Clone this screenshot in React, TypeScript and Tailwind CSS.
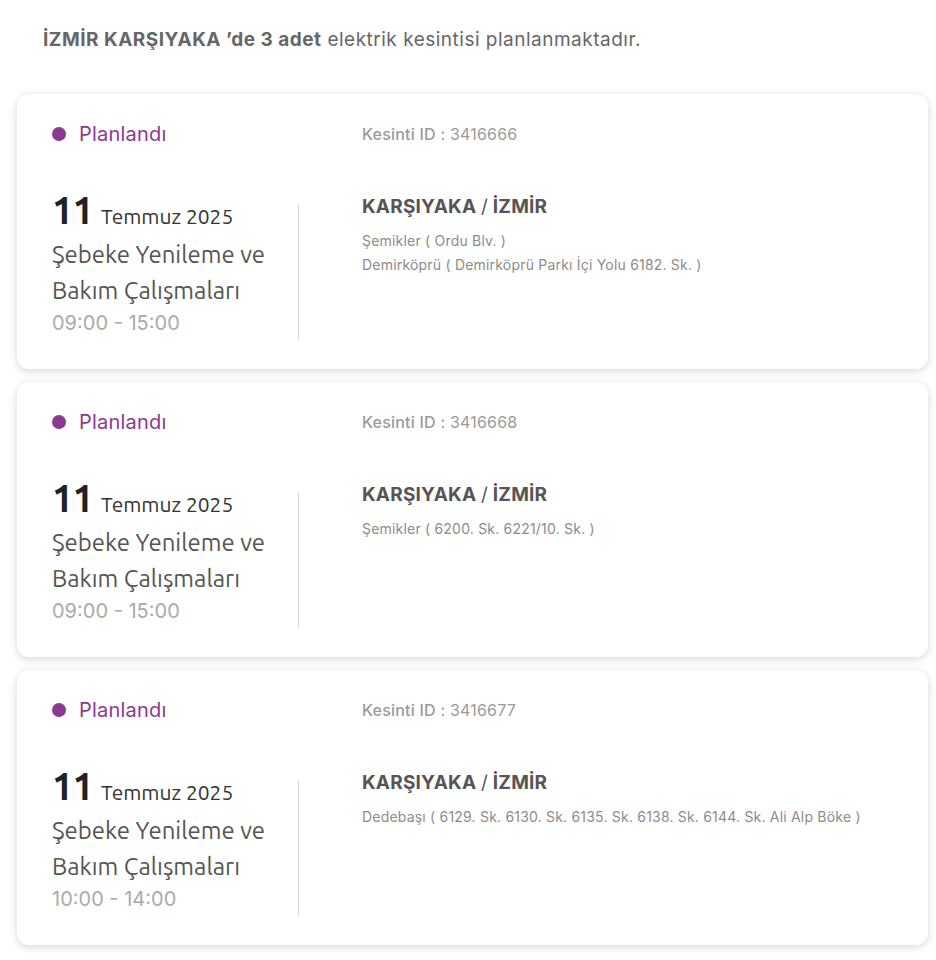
import React from "react";

type Outage = {
  id: string;
  day: string;
  monthYear: string;
  time: string;
  addresses: string[];
};

const OUTAGES: Outage[] = [
  {
    id: "3416666",
    day: "11",
    monthYear: "Temmuz 2025",
    time: "09:00 - 15:00",
    addresses: ["Şemikler ( Ordu Blv. )", "Demirköprü ( Demirköprü Parkı İçi Yolu 6182. Sk. )"],
  },
  {
    id: "3416668",
    day: "11",
    monthYear: "Temmuz 2025",
    time: "09:00 - 15:00",
    addresses: ["Şemikler ( 6200. Sk. 6221/10. Sk. )"],
  },
  {
    id: "3416677",
    day: "11",
    monthYear: "Temmuz 2025",
    time: "10:00 - 14:00",
    addresses: ["Dedebaşı ( 6129. Sk. 6130. Sk. 6135. Sk. 6138. Sk. 6144. Sk. Ali Alp Böke )"],
  },
];

function OutageCard({ outage }: { outage: Outage }) {
  return (
    <article className="h-[275px] rounded-xl bg-white px-[35px] pt-[26px] shadow-[0_2px_8px_rgba(0,0,0,0.16)]">
      <div className="flex h-[28px] items-center">
        <div className="flex w-[310px] items-center gap-[13px]">
          <span className="h-[14px] w-[14px] rounded-full bg-[#8a3b8f]" />
          <span className="text-[20px] tracking-[0.2px] text-[#8a3b8f]">Planlandı</span>
        </div>
        <p className="text-[16px] tracking-[0.2px] text-[#9a9a9a]">
          <span className="font-medium">Kesinti ID</span> : {outage.id}
        </p>
      </div>

      <div className="mt-[43px] flex">
        <div className="w-[246px] font-['Ubuntu','Open_Sans',sans-serif]">
          <div className="flex items-baseline gap-[8px] leading-none">
            <span className="text-[38px] font-bold tracking-tight text-[#222]">{outage.day}</span>
            <span className="text-[21px] text-[#333]">{outage.monthYear}</span>
          </div>
          <p className="mt-[8px] text-[24px] leading-[36px] text-[#555]">
            Şebeke Yenileme ve Bakım Çalışmaları
          </p>
          <p className="text-[20px] leading-[28px] text-[#aaa] font-['Inter',sans-serif]">{outage.time}</p>
        </div>
        <div className="mt-[13px] h-[135px] w-px bg-[#d6d6d6]" />
        <div className="pl-[63px] pt-[2px]">
          <p className="text-[19px] font-bold tracking-[0.2px] text-[#555]">
            KARŞIYAKA <span className="font-normal">/</span> İZMİR
          </p>
          <div className="mt-[8px] text-[14px] leading-[24px] tracking-[0.2px] text-[#8c8c8c]">
            {outage.addresses.map((a) => (
              <p key={a}>{a}</p>
            ))}
          </div>
        </div>
      </div>
    </article>
  );
}

export default function App() {
  return (
    <div className="min-h-[960px] bg-white font-['Inter',sans-serif]">
      <div className="px-[17px] pb-4 pt-[26px]">
        <p className="pl-[26px] text-[19px] tracking-[0.5px] text-[#666]">
          <span className="font-bold">İZMİR KARŞIYAKA ’de 3 adet</span> elektrik kesintisi planlanmaktadır.
        </p>
        <div className="mt-[39px] flex w-[911px] flex-col gap-[13px]">
          {OUTAGES.map((o) => (
            <OutageCard key={o.id} outage={o} />
          ))}
        </div>
      </div>
    </div>
  );
}
